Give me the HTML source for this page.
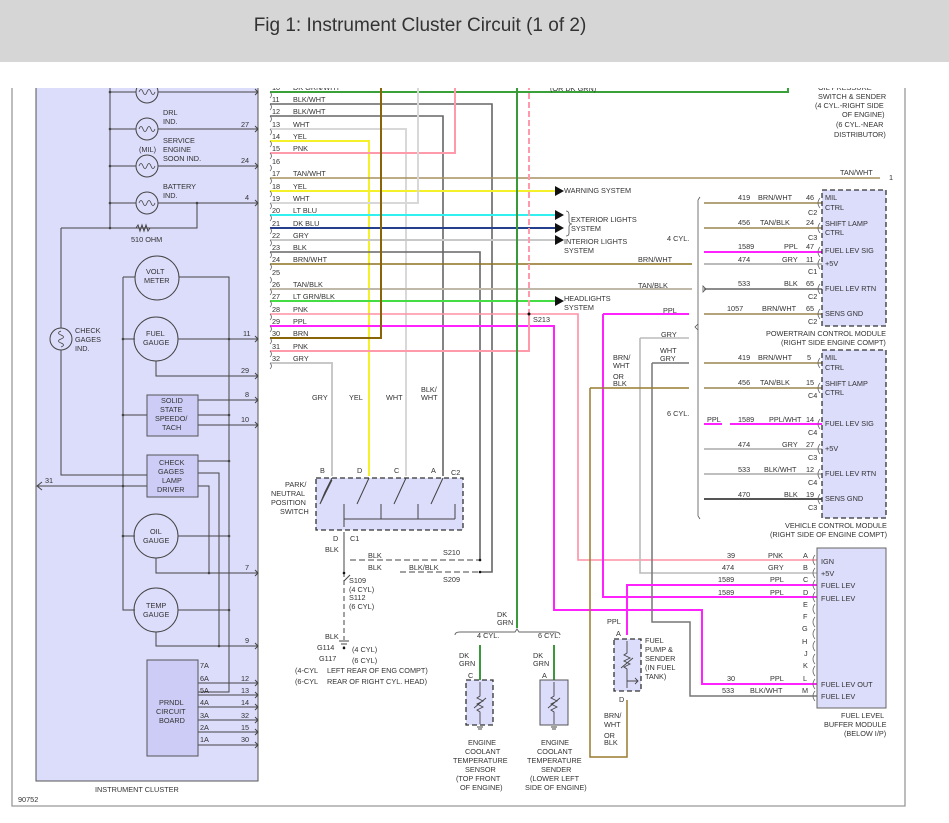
<!DOCTYPE html>
<html><head><meta charset="utf-8"><style>
html,body{margin:0;padding:0;background:#fff;width:949px;height:823px;overflow:hidden}
#hdr{position:absolute;left:0;top:0;width:949px;height:62px;background:#d6d6d6;z-index:2}
#hdr div{position:absolute;left:0;width:840px;top:15px;text-align:center;font:19px "Liberation Sans",sans-serif;color:#333}
#mask{position:absolute;left:0;top:62px;width:949px;height:26px;background:#fff;z-index:1}
svg{position:absolute;left:0;top:0}
text{font-family:"Liberation Sans",sans-serif;font-size:7.3px;fill:#333}
</style></head><body>
<div id="hdr"><div>Fig 1: Instrument Cluster Circuit (1 of 2)</div></div>
<div id="mask"></div>
<svg width="949" height="823" viewBox="0 0 949 823">
<!-- frame -->
<path d="M12 88 V806 H905 V88" fill="none" stroke="#999" stroke-width="1.3"/>
<!-- cluster -->
<rect x="36" y="86" width="222" height="695" fill="#dcdcfb" stroke="#555" stroke-width="1"/>
<text x="95" y="792">INSTRUMENT CLUSTER</text>
<text x="18" y="802" font-size="6.5">90752</text>
<g stroke="#444" stroke-width="1" fill="none">
<path d="M110 86 V228 M61 228 H197 V203 M110 92 H136 M158 92 H258 M110 129 H136 M158 129 H258 M110 166 H136 M158 166 H258 M110 203 H136 M158 203 H258"/>
<circle cx="147" cy="92" r="11"/><circle cx="147" cy="129" r="11"/><circle cx="147" cy="166" r="11"/><circle cx="147" cy="203" r="11"/>
<path d="M139 92 q2 -5 4 0 q2 5 4 0 q2 -5 4 0 q2 5 4 0 M139 129 q2 -5 4 0 q2 5 4 0 q2 -5 4 0 q2 5 4 0 M139 166 q2 -5 4 0 q2 5 4 0 q2 -5 4 0 q2 5 4 0 M139 203 q2 -5 4 0 q2 5 4 0 q2 -5 4 0 q2 5 4 0" stroke-width="0.8"/>
<path d="M61 228 V328 M61 350 V475 H147"/>
<circle cx="61" cy="339" r="11"/>
<path d="M61 331 q-5 2 0 4 q5 2 0 4 q-5 2 0 4 q5 2 0 4" stroke-width="0.8"/>
<path d="M147 486 H38 M42 482 L37 486 L42 490"/>
<path d="M123 277 V610 H135 M123 339 H135 M123 415 H147 M123 486 H147 M123 536 H135 M123 277 H135"/>
<path d="M179 277 H229 V692 H198 M178 339 H258 M156 361 V376 H258 M198 400 H258 M198 415 H229 M198 425 H258 M198 461 H229 M198 473 H219 V646 M198 486 H209 V573 M178 536 H229 M156 558 V573 H258 M178 610 H229 M156 632 V646 H258"/>
<circle cx="157" cy="278" r="22"/><circle cx="156" cy="339" r="22"/><circle cx="156" cy="536" r="22"/><circle cx="156" cy="610" r="22"/>
<path d="M198 683 H258 M198 695 H258 M198 707 H258 M198 720 H258 M198 732 H258 M198 745 H258"/>
<path d="M255 89 L258 92 L255 95 M255 126 L258 129 L255 132 M255 163 L258 166 L255 169 M255 200 L258 203 L255 206 M255 336 L258 339 L255 342 M255 373 L258 376 L255 379 M255 397 L258 400 L255 403 M255 422 L258 425 L255 428 M255 570 L258 573 L255 576 M255 643 L258 646 L255 649 M255 680 L258 683 L255 686 M255 692 L258 695 L255 698 M255 704 L258 707 L255 710 M255 717 L258 720 L255 723 M255 729 L258 732 L255 735 M255 742 L258 745 L255 748"/>
</g>
<path d="M136 228 l2-3 2 6 2-6 2 6 2-6 2 6 2-3" fill="none" stroke="#444"/>
<g fill="#ccccf7" stroke="#555"><rect x="147" y="395" width="51" height="41"/><rect x="147" y="455" width="51" height="42"/><rect x="147" y="660" width="51" height="96"/></g>
<g fill="#444"><circle cx="110" cy="92" r="1.3"/><circle cx="110" cy="129" r="1.3"/><circle cx="110" cy="166" r="1.3"/><circle cx="110" cy="203" r="1.3"/><circle cx="110" cy="228" r="1.3"/><circle cx="197" cy="203" r="1.3"/><circle cx="229" cy="339" r="1.3"/><circle cx="123" cy="339" r="1.3"/><circle cx="229" cy="415" r="1.3"/><circle cx="123" cy="415" r="1.3"/><circle cx="229" cy="461" r="1.3"/><circle cx="123" cy="486" r="1.3"/><circle cx="229" cy="536" r="1.3"/><circle cx="209" cy="573" r="1.3"/><circle cx="229" cy="610" r="1.3"/><circle cx="219" cy="646" r="1.3"/><circle cx="123" cy="536" r="1.3"/></g>
<text x="163" y="115">DRL</text><text x="163" y="124">IND.</text>
<text x="163" y="143">SERVICE</text><text x="139" y="152">(MIL)</text><text x="163" y="152">ENGINE</text><text x="163" y="161">SOON IND.</text>
<text x="163" y="189">BATTERY</text><text x="163" y="198">IND.</text>
<text x="131" y="242">510 OHM</text>
<text x="75" y="333">CHECK</text><text x="75" y="342">GAGES</text><text x="75" y="351">IND.</text>
<text x="146" y="274">VOLT</text><text x="144" y="283">METER</text>
<text x="146" y="336">FUEL</text><text x="143" y="345">GAUGE</text>
<text x="161" y="403">SOLID</text><text x="160" y="412">STATE</text><text x="155" y="421">SPEEDO/</text><text x="162" y="430">TACH</text>
<text x="159" y="465">CHECK</text><text x="158" y="474">GAGES</text><text x="162" y="483">LAMP</text><text x="157" y="492">DRIVER</text>
<text x="150" y="534">OIL</text><text x="143" y="543">GAUGE</text>
<text x="146" y="608">TEMP</text><text x="143" y="617">GAUGE</text>
<text x="159" y="705">PRNDL</text><text x="156" y="714">CIRCUIT</text><text x="159" y="723">BOARD</text>
<text x="241" y="127">27</text><text x="241" y="163">24</text><text x="245" y="200">4</text><text x="243" y="336">11</text><text x="241" y="373">29</text><text x="245" y="397">8</text><text x="241" y="422">10</text><text x="45" y="483">31</text><text x="245" y="570">7</text><text x="245" y="643">9</text>
<text x="200" y="668">7A</text><text x="200" y="681">6A</text><text x="200" y="693">5A</text><text x="200" y="705">4A</text><text x="200" y="718">3A</text><text x="200" y="730">2A</text><text x="200" y="742">1A</text>
<text x="241" y="681">12</text><text x="241" y="693">13</text><text x="241" y="705">14</text><text x="241" y="718">32</text><text x="241" y="730">15</text><text x="241" y="742">30</text>

<!-- wires -->
<g fill="none" stroke-width="2">
<path d="M270 92 H788 V80" stroke="#3aa03a"/>
<path d="M270 104 H492 V572 H480" stroke="#666" stroke-width="1.6"/>
<path d="M270 116 H443 V476" stroke="#666" stroke-width="1.6"/>
<path d="M270 129 H406 V476" stroke="#d8d8d8"/>
<path d="M270 141 H369 V476" stroke="#f4f02a"/>
<path d="M270 153 H455 V80" stroke="#ff9aab"/>
<path d="M270 178 H880" stroke="#a89060" stroke-width="1.5"/>
<path d="M270 191 H555" stroke="#f4f02a"/>
<path d="M270 203 H418 V80" stroke="#d8d8d8"/>
<path d="M270 215 H555" stroke="#33f0f0"/>
<path d="M270 228 H555" stroke="#24408c"/>
<path d="M270 240 H555" stroke="#c8c8c8"/>
<path d="M270 252 H480 V560" stroke="#666" stroke-width="1.6"/>
<path d="M270 264 H692" stroke="#8d7020" stroke-width="1.6"/>
<path d="M270 289 H692" stroke="#c0b8a8"/>
<path d="M270 301 H555" stroke="#44dd44"/>
<path d="M270 314 H578 V560 H817" stroke="#ff90a4" stroke-width="1.6"/>
<path d="M270 326 H554 V610 H702 V684 H817" stroke="#ff22ff"/>
<path d="M270 338 H381 V80" stroke="#8a6408"/>
<path d="M270 351 H529 V315" stroke="#ff9aab"/>
<path d="M529 315 V80" stroke="#ff9aab" stroke-dasharray="6 3"/>
<path d="M270 363 H332 V476" stroke="#c8c8c8"/>
<path d="M517 80 V628" stroke="#3a9a3a"/>
<path d="M603 314 H689 M603 314 V597 H817" stroke="#ff22ff"/>
<path d="M640 338 H689 M640 338 V573 H817" stroke="#bbb" stroke-width="1.6"/>
<path d="M652 363 H689 M652 363 V622 H690 V696 H817" stroke="#777" stroke-width="1.5"/>
<path d="M590 388 H689 M590 388 V757 H627 V700" stroke="#9a7a30" stroke-width="1.5"/>
<path d="M627 635 V585 H817" stroke="#ff22ff"/>
<path d="M480 645 V680 M554 645 V680" stroke="#3a9a3a"/>
<path d="M704 203 H822 M704 228 H822" stroke="#9a8550" stroke-width="1.6"/>
<path d="M704 252 H822" stroke="#ff22ff"/>
<path d="M704 264 H822" stroke="#bbb"/>
<path d="M704 289 H822" stroke="#666" stroke-width="1.5"/>
<path d="M704 314 H822" stroke="#9a8550" stroke-width="1.6"/>
<path d="M704 363 H822 M704 388 H822" stroke="#9a8550" stroke-width="1.6"/>
<path d="M704 424 H722 M730 424 H822" stroke="#ff22ff"/>
<path d="M704 449 H822 M704 474 H822" stroke="#aaa" stroke-width="1.6"/>
<path d="M704 499 H822" stroke="#555"/>
</g>
<g fill="#111"><path d="M555 186 l9 5 -9 5z M555 210 l9 5 -9 5z M555 223 l9 5 -9 5z M555 235 l9 5 -9 5z M555 296 l9 5 -9 5z"/><circle cx="529" cy="314" r="1.5"/></g>
<g fill="none" stroke="#555" stroke-width="0.8">
<path d="M698 200 V516 M698 200 l2 -3 M698 516 l2 3 M698 324 l-3 3 3 3"/>
<path d="M566 211 q3 0 3 4 v6 q0 3 3 3 q-3 0 -3 3 v6 q0 3-3 3"/>
<path d="M706 289 l-3 -3 v6z"/>
</g>
<g fill="none" stroke="#666" stroke-width="0.8">
<path d="M270 92 q3 3 0 6 M270 104 q3 3 0 6 M270 116 q3 3 0 6 M270 129 q3 3 0 6 M270 141 q3 3 0 6 M270 153 q3 3 0 6 M270 165 q3 3 0 6 M270 178 q3 3 0 6 M270 191 q3 3 0 6 M270 203 q3 3 0 6 M270 215 q3 3 0 6 M270 228 q3 3 0 6 M270 240 q3 3 0 6 M270 252 q3 3 0 6 M270 264 q3 3 0 6 M270 277 q3 3 0 6 M270 289 q3 3 0 6 M270 301 q3 3 0 6 M270 314 q3 3 0 6 M270 326 q3 3 0 6 M270 338 q3 3 0 6 M270 351 q3 3 0 6 M270 363 q3 3 0 6"/>
<path d="M820 198 q-4 5 0 10 M820 223 q-4 5 0 10 M820 247 q-4 5 0 10 M820 259 q-4 5 0 10 M820 284 q-4 5 0 10 M820 309 q-4 5 0 10 M820 358 q-4 5 0 10 M820 383 q-4 5 0 10 M820 419 q-4 5 0 10 M820 444 q-4 5 0 10 M820 469 q-4 5 0 10 M820 494 q-4 5 0 10"/>
<path d="M815 555 q-4 5 0 10 M815 568 q-4 5 0 10 M815 580 q-4 5 0 10 M815 592 q-4 5 0 10 M815 604 q-4 5 0 10 M815 617 q-4 5 0 10 M815 629 q-4 5 0 10 M815 641 q-4 5 0 10 M815 654 q-4 5 0 10 M815 666 q-4 5 0 10 M815 679 q-4 5 0 10 M815 691 q-4 5 0 10"/>
</g>
<g fill="#dcdcfb" stroke="#333" stroke-width="1.3"><rect x="822" y="190" width="64" height="136" stroke-dasharray="5 3"/><rect x="822" y="350" width="64" height="168" stroke-dasharray="5 3"/><rect x="817" y="548" width="69" height="160" stroke="#666" stroke-width="1"/></g>
<g>
<text x="825" y="200">MIL</text><text x="825" y="210">CTRL</text><text x="825" y="226">SHIFT LAMP</text><text x="825" y="235">CTRL</text><text x="825" y="253">FUEL LEV SIG</text><text x="825" y="266">+5V</text><text x="825" y="291">FUEL LEV RTN</text><text x="825" y="316">SENS GND</text>
<text x="766" y="336">POWERTRAIN CONTROL MODULE</text><text x="781" y="345">(RIGHT SIDE ENGINE COMPT)</text>
<text x="825" y="360">MIL</text><text x="825" y="370">CTRL</text><text x="825" y="386">SHIFT LAMP</text><text x="825" y="395">CTRL</text><text x="825" y="426">FUEL LEV SIG</text><text x="825" y="451">+5V</text><text x="825" y="476">FUEL LEV RTN</text><text x="825" y="501">SENS GND</text>
<text x="785" y="528">VEHICLE CONTROL MODULE</text><text x="770" y="537">(RIGHT SIDE OF ENGINE COMPT)</text>
<text x="821" y="564">IGN</text><text x="821" y="576">+5V</text><text x="821" y="588">FUEL LEV</text><text x="821" y="601">FUEL LEV</text><text x="821" y="687">FUEL LEV OUT</text><text x="821" y="699">FUEL LEV</text>
<text x="841" y="718">FUEL LEVEL</text><text x="824" y="727">BUFFER MODULE</text><text x="844" y="736">(BELOW I/P)</text>
<text x="818" y="90">OIL PRESSURE</text><text x="818" y="99">SWITCH &amp; SENDER</text><text x="815" y="108">(4 CYL.-RIGHT SIDE</text><text x="842" y="117">OF ENGINE)</text><text x="836" y="127">(6 CYL.-NEAR</text><text x="834" y="137">DISTRIBUTOR)</text>
<text x="840" y="175">TAN/WHT</text><text x="889" y="180">1</text>
<text x="738" y="200">419</text><text x="758" y="200">BRN/WHT</text><text x="806" y="200">46</text><text x="808" y="215">C2</text>
<text x="738" y="225">456</text><text x="760" y="225">TAN/BLK</text><text x="806" y="225">24</text><text x="808" y="240">C3</text>
<text x="738" y="249">1589</text><text x="784" y="249">PPL</text><text x="806" y="249">47</text>
<text x="738" y="262">474</text><text x="782" y="262">GRY</text><text x="806" y="262">11</text><text x="808" y="274">C1</text>
<text x="738" y="286">533</text><text x="784" y="286">BLK</text><text x="806" y="286">65</text><text x="808" y="299">C2</text>
<text x="727" y="311">1057</text><text x="762" y="311">BRN/WHT</text><text x="806" y="311">65</text><text x="808" y="324">C2</text>
<text x="738" y="360">419</text><text x="758" y="360">BRN/WHT</text><text x="807" y="360">5</text>
<text x="738" y="385">456</text><text x="760" y="385">TAN/BLK</text><text x="806" y="385">15</text><text x="808" y="398">C4</text>
<text x="707" y="422">PPL</text><text x="738" y="422">1589</text><text x="769" y="422">PPL/WHT</text><text x="806" y="422">14</text><text x="808" y="435">C4</text>
<text x="738" y="447">474</text><text x="782" y="447">GRY</text><text x="806" y="447">27</text><text x="808" y="460">C3</text>
<text x="738" y="472">533</text><text x="764" y="472">BLK/WHT</text><text x="806" y="472">12</text><text x="808" y="485">C4</text>
<text x="738" y="497">470</text><text x="784" y="497">BLK</text><text x="806" y="497">19</text><text x="808" y="510">C3</text>
<text x="667" y="241">4 CYL.</text><text x="667" y="416">6 CYL.</text>
<text x="727" y="558">39</text><text x="768" y="558">PNK</text><text x="803" y="558">A</text>
<text x="722" y="570">474</text><text x="768" y="570">GRY</text><text x="803" y="570">B</text>
<text x="718" y="582">1589</text><text x="770" y="582">PPL</text><text x="803" y="582">C</text>
<text x="718" y="595">1589</text><text x="770" y="595">PPL</text><text x="803" y="595">D</text>
<text x="803" y="607">E</text><text x="803" y="619">F</text><text x="802" y="631">G</text><text x="802" y="644">H</text><text x="804" y="656">J</text><text x="803" y="668">K</text>
<text x="727" y="681">30</text><text x="770" y="681">PPL</text><text x="803" y="681">L</text>
<text x="722" y="693">533</text><text x="750" y="693">BLK/WHT</text><text x="802" y="693">M</text>
</g>
<g>
<text x="272" y="90">10</text><text x="293" y="90">DK GRN/WHT</text><text x="550" y="91">(OR DK GRN)</text>
<text x="272" y="102">11</text><text x="293" y="102">BLK/WHT</text>
<text x="272" y="114">12</text><text x="293" y="114">BLK/WHT</text>
<text x="272" y="127">13</text><text x="293" y="127">WHT</text>
<text x="272" y="139">14</text><text x="293" y="139">YEL</text>
<text x="272" y="151">15</text><text x="293" y="151">PNK</text>
<text x="272" y="164">16</text>
<text x="272" y="176">17</text><text x="293" y="176">TAN/WHT</text>
<text x="272" y="189">18</text><text x="293" y="189">YEL</text>
<text x="272" y="201">19</text><text x="293" y="201">WHT</text>
<text x="272" y="213">20</text><text x="293" y="213">LT BLU</text>
<text x="272" y="226">21</text><text x="293" y="226">DK BLU</text>
<text x="272" y="238">22</text><text x="293" y="238">GRY</text>
<text x="272" y="250">23</text><text x="293" y="250">BLK</text>
<text x="272" y="262">24</text><text x="293" y="262">BRN/WHT</text>
<text x="272" y="275">25</text>
<text x="272" y="287">26</text><text x="293" y="287">TAN/BLK</text>
<text x="272" y="299">27</text><text x="293" y="299">LT GRN/BLK</text>
<text x="272" y="312">28</text><text x="293" y="312">PNK</text>
<text x="272" y="324">29</text><text x="293" y="324">PPL</text>
<text x="272" y="336">30</text><text x="293" y="336">BRN</text>
<text x="272" y="349">31</text><text x="293" y="349">PNK</text>
<text x="272" y="361">32</text><text x="293" y="361">GRY</text>
<text x="564" y="193">WARNING SYSTEM</text>
<text x="571" y="222">EXTERIOR LIGHTS</text><text x="571" y="231">SYSTEM</text>
<text x="564" y="244">INTERIOR LIGHTS</text><text x="564" y="253">SYSTEM</text>
<text x="638" y="262">BRN/WHT</text><text x="638" y="288">TAN/BLK</text>
<text x="564" y="301">HEADLIGHTS</text><text x="564" y="310">SYSTEM</text>
<text x="533" y="322">S213</text><text x="663" y="313">PPL</text><text x="661" y="337">GRY</text>
<text x="613" y="360">BRN/</text><text x="613" y="368">WHT</text><text x="660" y="353">WHT</text><text x="660" y="361">GRY</text>
<text x="613" y="379">OR</text><text x="613" y="386">BLK</text>
<text x="312" y="400">GRY</text><text x="349" y="400">YEL</text><text x="386" y="400">WHT</text><text x="421" y="392">BLK/</text><text x="421" y="400">WHT</text>
</g>
<rect x="316" y="478" width="147" height="52" fill="#dcdcfb" stroke="#333" stroke-width="1.3" stroke-dasharray="5 3"/>
<g fill="none" stroke="#444" stroke-width="1">
<path d="M332 478 l-7 14 M325 492 l-5 12 M369 478 l-12 26 M406 478 l-12 26 M443 478 l-12 26 M344 504 V527 M344 519 H455 M381 504 V519 M418 504 V519 M455 504 V519 M332 480 l-12 24"/>
<path d="M344 532 V572 M344 581 l6 -6"/>
<path d="M344 572 V640" stroke-dasharray="5 3"/>
<path d="M339 641 h10 M341 644 h6 M343 647 h2"/>
<path d="M350 560 H480 M400 572 H480" stroke-dasharray="6 3"/>
<path d="M455 635 q0 -3 5 -3 H515 l2 -3 2 3 H555 q5 0 5 3" stroke="#666"/>
</g>
<g fill="#111"><circle cx="344" cy="573" r="1.3"/><circle cx="480" cy="560" r="1.3"/><circle cx="480" cy="572" r="1.3"/><circle cx="344" cy="648" r="1.3"/></g>
<g>
<text x="320" y="473">B</text><text x="357" y="473">D</text><text x="394" y="473">C</text><text x="431" y="473">A</text><text x="451" y="475">C2</text>
<text x="285" y="487">PARK/</text><text x="271" y="496">NEUTRAL</text><text x="271" y="505">POSITION</text><text x="280" y="514">SWITCH</text>
<text x="333" y="541">D</text><text x="350" y="541">C1</text><text x="325" y="552">BLK</text>
<text x="368" y="558">BLK</text><text x="443" y="555">S210</text><text x="368" y="570">BLK</text><text x="409" y="570">BLK/BLK</text><text x="443" y="582">S209</text>
<text x="349" y="583">S109</text><text x="349" y="592">(4 CYL)</text><text x="349" y="600">S112</text><text x="349" y="609">(6 CYL)</text>
<text x="325" y="639">BLK</text><text x="317" y="650">G114</text><text x="319" y="661">G117</text><text x="352" y="652">(4 CYL)</text><text x="352" y="663">(6 CYL)</text>
<text x="295" y="673">(4-CYL</text><text x="327" y="673">LEFT REAR OF ENG COMPT)</text><text x="295" y="684">(6-CYL</text><text x="327" y="684">REAR OF RIGHT CYL. HEAD)</text>
<text x="497" y="617">DK</text><text x="497" y="625">GRN</text>
<text x="477" y="638">4 CYL.</text><text x="538" y="638">6 CYL.</text>
<text x="459" y="658">DK</text><text x="459" y="666">GRN</text><text x="533" y="658">DK</text><text x="533" y="666">GRN</text>
<text x="468" y="678">C</text><text x="542" y="678">A</text>
<text x="468" y="745">ENGINE</text><text x="465" y="754">COOLANT</text><text x="453" y="763">TEMPERATURE</text><text x="465" y="772">SENSOR</text><text x="456" y="781">(TOP FRONT</text><text x="460" y="790">OF ENGINE)</text>
<text x="541" y="745">ENGINE</text><text x="537" y="754">COOLANT</text><text x="527" y="763">TEMPERATURE</text><text x="541" y="772">SENDER</text><text x="530" y="781">(LOWER LEFT</text><text x="525" y="790">SIDE OF ENGINE)</text>
<text x="607" y="624">PPL</text><text x="616" y="636">A</text><text x="619" y="702">D</text>
<text x="645" y="643">FUEL</text><text x="645" y="652">PUMP &amp;</text><text x="645" y="661">SENDER</text><text x="645" y="670">(IN FUEL</text><text x="645" y="679">TANK)</text>
<text x="604" y="718">BRN/</text><text x="604" y="727">WHT</text><text x="604" y="738">OR</text><text x="604" y="745">BLK</text>
</g>
<rect x="466" y="680" width="27" height="45" fill="#dcdcfb" stroke="#333" stroke-width="1.3" stroke-dasharray="5 3"/>
<rect x="540" y="680" width="28" height="45" fill="#dcdcfb" stroke="#555"/>
<rect x="614" y="639" width="27" height="52" fill="#dcdcfb" stroke="#333" stroke-width="1.3" stroke-dasharray="5 3"/>
<g fill="none" stroke="#444" stroke-width="0.9">
<path d="M480 682 V696 l-3 2 6 3 -6 3 6 3 -6 3 3 2 V724 M474 708 l12 -10 M554 682 V696 l-3 2 6 3 -6 3 6 3 -6 3 3 2 V724 M548 708 l12 -10 M477 727 h6 M478 729 h4 M551 727 h6 M552 729 h4"/>
<path d="M627 641 V653 l-3 2 6 3 -6 3 6 3 -6 3 3 2 V688 M621 668 l12 -10 M627 681 H638 M635 678 l3 3 -3 3"/>
</g>
</svg>
</body></html>
